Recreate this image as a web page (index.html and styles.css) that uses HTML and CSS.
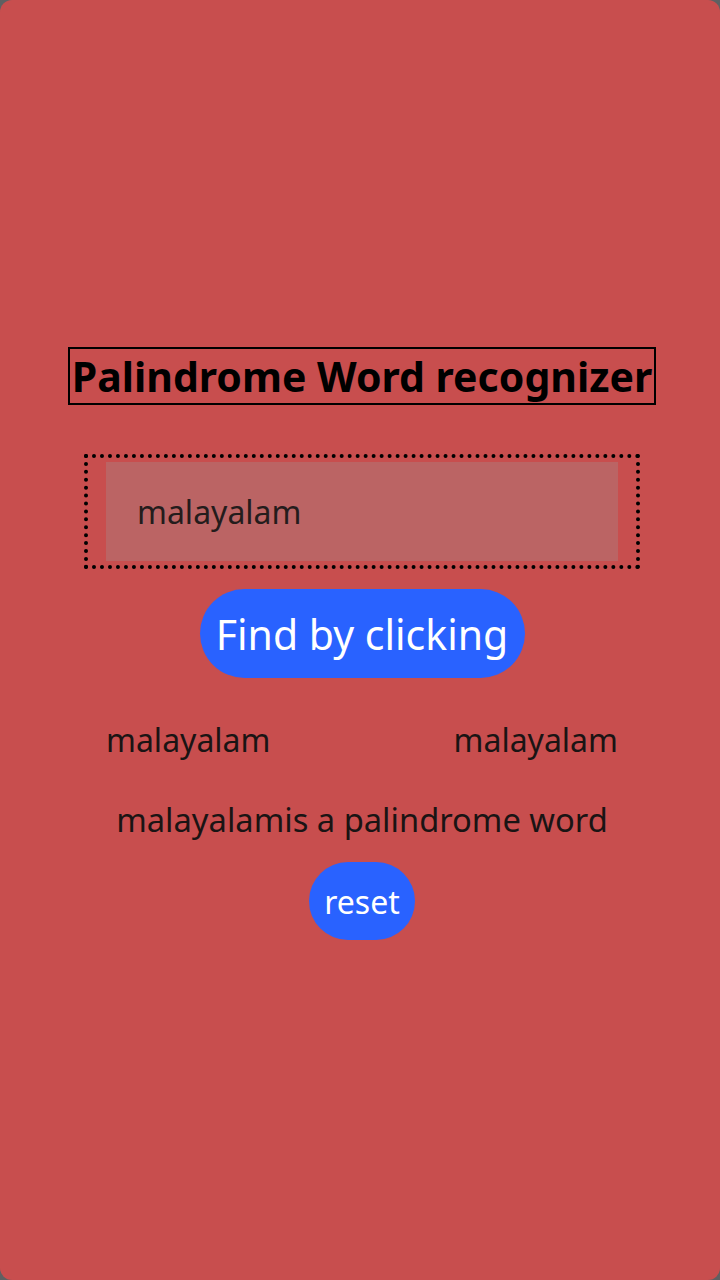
FILE: index.html
```html
<!DOCTYPE html>
<html>
<head>
<meta charset="utf-8">
<link rel="stylesheet" href="styles.css">
</head>
<body>
<div class="app">
  <h1 class="title">Palindrome Word recognizer</h1>
  <div class="field">
    <div class="input">malayalam</div>
  </div>
  <button class="find">Find by clicking</button>
  <div class="pair">
    <span>malayalam</span>
    <span>malayalam</span>
  </div>
  <p class="msg">malayalamis a palindrome word</p>
  <button class="reset">reset</button>
</div>
</body>
</html>
```

FILE: styles.css
```css
html, body {
  margin: 0;
  padding: 0;
  background: #5f6062;
}
.app {
  box-sizing: border-box;
  height: 1280px;
  background: #c84e4e;
  border-radius: 12px;
  display: flex;
  flex-direction: column;
  align-items: center;
  padding-top: 347px;
  padding-left: 4px;
  font-family: "Noto Sans", "Open Sans", sans-serif;
  color: #1a1414;
}
.title {
  margin: 0;
  border: 2px solid #000;
  padding: 0 2px;
  font-size: 41px;
  font-weight: 700;
  line-height: 54px;
  color: #000;
  white-space: nowrap;
}
.field {
  margin-top: 49px;
  border: 4px dotted #000;
  padding: 4px 18px;
}
.input {
  box-sizing: border-box;
  width: 512px;
  height: 99px;
  background: #bb6464;
  padding-left: 31px;
  display: flex;
  align-items: center;
  font-size: 32px;
  color: #241c1c;
}
.find {
  margin-top: 20px;
  width: 325px;
  height: 89px;
  border: none;
  border-radius: 45px;
  background: #2962ff;
  color: #fff;
  font-family: inherit;
  font-size: 41px;
  padding: 0;
}
.pair {
  margin-top: 40px;
  width: 512px;
  display: flex;
  justify-content: space-between;
  font-size: 32px;
  line-height: 44px;
}
.msg {
  margin: 36px 0 0;
  font-size: 32.7px;
  line-height: 44px;
}
.reset {
  margin-top: 20px;
  width: 106px;
  height: 78px;
  border: none;
  border-radius: 39px;
  background: #2962ff;
  color: #fff;
  font-family: inherit;
  font-size: 32px;
  padding: 0;
}
```
